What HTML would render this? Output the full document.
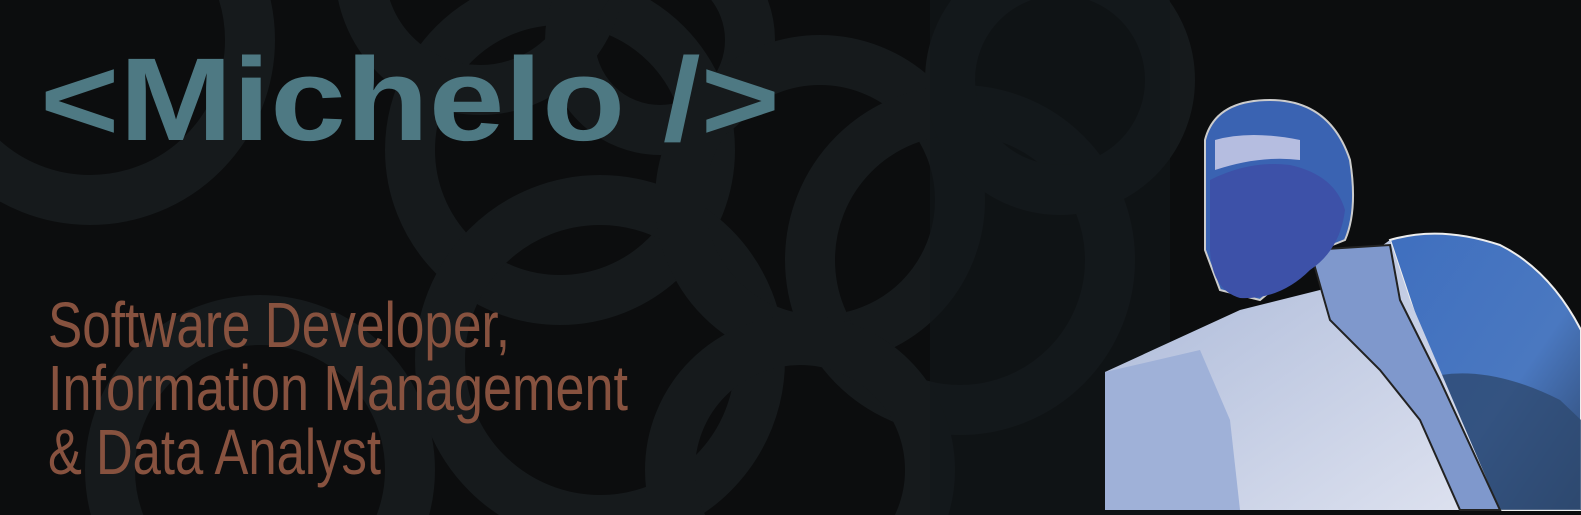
<!DOCTYPE html>
<html><head><meta charset="utf-8"><style>
html,body{margin:0;padding:0;background:#0c0d0e;overflow:hidden;width:1581px;height:515px}
svg{display:block;position:absolute;left:0;top:0}
</style></head><body>
<svg width="1581" height="515" viewBox="0 0 1581 515" xmlns="http://www.w3.org/2000/svg">
<defs>
<linearGradient id="sh" x1="0" y1="0" x2="1" y2="1"><stop offset="0" stop-color="#aab8d8"/><stop offset="1" stop-color="#dfe3f0"/></linearGradient>
<linearGradient id="bp" x1="0" y1="0" x2="1" y2="1"><stop offset="0" stop-color="#3f6fbf"/><stop offset="0.6" stop-color="#4a78c0"/><stop offset="1" stop-color="#2c4468"/></linearGradient>
</defs>
<rect width="1581" height="515" fill="#0c0d0e"/>
<g fill="none" stroke="#161a1c" stroke-width="50">
<circle cx="90" cy="40" r="160"/>
<circle cx="560" cy="150" r="150"/>
<circle cx="480" cy="-30" r="120"/>
<circle cx="660" cy="40" r="90"/>
<circle cx="600" cy="360" r="160"/>
<circle cx="260" cy="470" r="150"/>
<circle cx="820" cy="200" r="140"/>
<circle cx="960" cy="260" r="150"/>
<circle cx="800" cy="470" r="130"/>
<circle cx="1060" cy="80" r="110"/>
</g>
<rect x="930" y="0" width="240" height="515" fill="#13171a" opacity="0.6"/>
<text x="40" y="140" font-family="Liberation Sans, sans-serif" font-weight="bold" font-size="118" fill="#4e7983" textLength="740" lengthAdjust="spacingAndGlyphs">&lt;Michelo /&gt;</text>
<g font-family="Liberation Sans, sans-serif" font-size="64" fill="#87523f">
<text x="48" y="347" textLength="462" lengthAdjust="spacingAndGlyphs">Software Developer,</text>
<text x="48" y="410" textLength="580" lengthAdjust="spacingAndGlyphs">Information Management</text>
<text x="48" y="474" textLength="333" lengthAdjust="spacingAndGlyphs">&amp; Data Analyst</text>
</g>
<path d="M1390 240 Q1440 225 1500 245 Q1550 270 1581 330 L1581 510 L1480 510 Z" fill="url(#bp)" stroke="#eee" stroke-width="2"/>
<path d="M1420 380 Q1480 360 1560 400 L1581 420 L1581 510 L1490 510 Z" fill="#2e4a70" opacity="0.8"/>
<path d="M1105 372 L1240 310 L1320 290 L1390 240 L1410 300 L1500 510 L1105 510 Z" fill="url(#sh)"/>
<path d="M1105 372 L1200 350 L1230 420 L1240 510 L1105 510 Z" fill="#9fb1d8"/>
<path d="M1310 250 L1390 245 L1400 300 L1440 380 L1500 510 L1460 510 L1420 420 L1380 370 L1330 320 Z" fill="#7f98cc" stroke="#222" stroke-width="2"/>
<path d="M1205 140 Q1215 100 1270 100 Q1330 100 1350 160 Q1358 210 1345 240 L1320 250 L1260 300 L1220 290 L1205 250 Z" fill="#3a63b2" stroke="#ccc" stroke-width="2"/>
<path d="M1210 180 Q1250 160 1290 165 Q1335 175 1345 210 Q1340 250 1310 270 Q1280 300 1240 298 Q1212 290 1210 250 Z" fill="#3d51a8"/>
<path d="M1215 140 Q1250 130 1300 140 L1300 160 Q1260 155 1215 170 Z" fill="#b5bde0"/>
</svg>
</body></html>
